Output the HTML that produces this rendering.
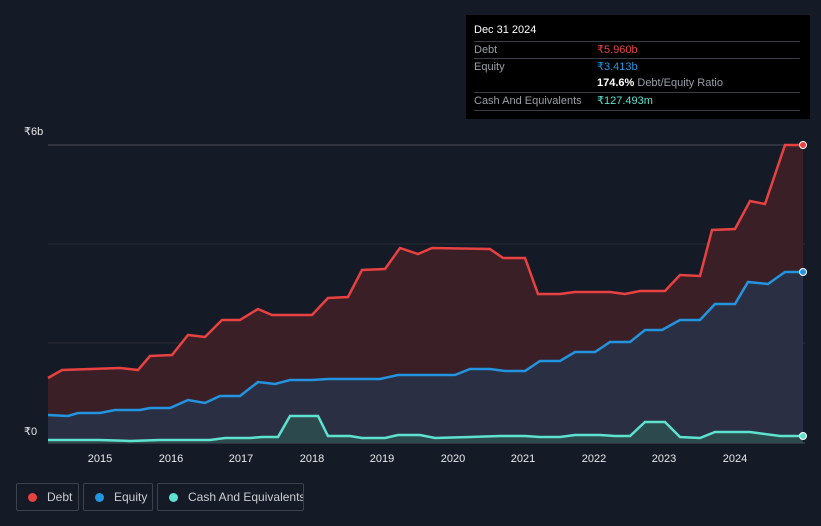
<!DOCTYPE html><html><head><style>
body{margin:0;width:821px;height:526px;background:#151b26;font-family:"Liberation Sans",sans-serif;overflow:hidden;position:relative}
.tt{position:absolute;left:466px;top:15px;width:344px;height:104px;background:#000;color:#fff;font-size:11px}
.tt .r{position:absolute;left:8px;right:10px;border-top:1px solid #3a3d44;height:16px;line-height:16px}
.lab{color:#9a9ea6}
.lg{position:absolute;top:483px;height:28px;border:1px solid #3b414d;border-radius:2px;color:#c9ccd2;font-size:12px;line-height:26px;box-sizing:border-box;white-space:nowrap;overflow:hidden}
.dot{display:inline-block;width:9px;height:9px;border-radius:50%;margin:0 10px 0 11px;vertical-align:-1px}
</style></head><body>
<svg width="821" height="526" style="position:absolute;left:0;top:0">
<line x1="48" y1="145" x2="805" y2="145" stroke="#4a4e58"/>
<line x1="48" y1="244" x2="805" y2="244" stroke="#262b36"/>
<line x1="48" y1="343" x2="805" y2="343" stroke="#262b36"/>
<line x1="48" y1="443" x2="805" y2="443" stroke="#4a4e58"/>
<polygon fill="#3b1f27" points="48,443 48,378 62,370 120,368 138,370 150,356 172,355 188,335 205,337 222,320 240,320 258,309 272,315 312,315 328,298 348,297 362,270 385,269 400,248 418,254 432,248 490,249 503,258 525,258 538,294 560,294 575,292 610,292 625,294 640,291 665,291 680,275 700,276 712,230 735,229 750,201 765,204 785,145 803,145 803,443"/>
<polygon fill="#2a2f43" points="48,443 48,415 68,416 78,413 100,413 115,410 140,410 150,408 170,408 188,400 205,403 220,396 240,396 258,382 275,384 290,380 312,380 328,379 380,379 398,375 420,375 455,375 470,369 490,369 505,371 525,371 540,361 560,361 575,352 595,352 610,342 630,342 645,330 662,330 680,320 700,320 715,304 735,304 748,282 768,284 785,272 803,272 803,443"/>
<polygon fill="#2c4a4e" points="48,443 48,440 100,440 130,441 160,440 210,440 225,438 250,438 262,437 278,437 290,416 318,416 328,436 350,436 362,438 385,438 398,435 420,435 435,438 470,437 500,436 525,436 540,437 560,437 575,435 600,435 615,436 630,436 645,422 665,422 680,437 700,438 715,432 750,432 780,436 803,436 803,443"/>
<polyline fill="none" stroke="#e84142" stroke-width="2.5" points="48,378 62,370 120,368 138,370 150,356 172,355 188,335 205,337 222,320 240,320 258,309 272,315 312,315 328,298 348,297 362,270 385,269 400,248 418,254 432,248 490,249 503,258 525,258 538,294 560,294 575,292 610,292 625,294 640,291 665,291 680,275 700,276 712,230 735,229 750,201 765,204 785,145 803,145"/>
<polyline fill="none" stroke="#2394df" stroke-width="2.5" points="48,415 68,416 78,413 100,413 115,410 140,410 150,408 170,408 188,400 205,403 220,396 240,396 258,382 275,384 290,380 312,380 328,379 380,379 398,375 420,375 455,375 470,369 490,369 505,371 525,371 540,361 560,361 575,352 595,352 610,342 630,342 645,330 662,330 680,320 700,320 715,304 735,304 748,282 768,284 785,272 803,272"/>
<polyline fill="none" stroke="#5ee2d0" stroke-width="2.5" points="48,440 100,440 130,441 160,440 210,440 225,438 250,438 262,437 278,437 290,416 318,416 328,436 350,436 362,438 385,438 398,435 420,435 435,438 470,437 500,436 525,436 540,437 560,437 575,435 600,435 615,436 630,436 645,422 665,422 680,437 700,438 715,432 750,432 780,436 803,436"/>
<circle cx="803" cy="145" r="3.5" fill="#e84142" stroke="#fff" stroke-width="1"/>
<circle cx="803" cy="272" r="3.5" fill="#2394df" stroke="#fff" stroke-width="1"/>
<circle cx="803" cy="436" r="3.5" fill="#5ee2d0" stroke="#fff" stroke-width="1"/>
<g fill="#e6e8eb" font-size="11" font-family="Liberation Sans,sans-serif">
<text x="24" y="135">₹6b</text><text x="24" y="435">₹0</text>
<g text-anchor="middle"><text x="100" y="462">2015</text><text x="171" y="462">2016</text><text x="241" y="462">2017</text><text x="312" y="462">2018</text><text x="382" y="462">2019</text><text x="453" y="462">2020</text><text x="523" y="462">2021</text><text x="594" y="462">2022</text><text x="664" y="462">2023</text><text x="735" y="462">2024</text></g>
</g>
</svg>
<div class="tt">
<div style="position:absolute;left:8px;top:9px;font-size:11px">Dec 31 2024</div>
<div class="r" style="top:26px"><span class="lab">Debt</span><span style="position:absolute;left:123px;color:#e84142">₹5.960b</span></div>
<div class="r" style="top:43px"><span class="lab">Equity</span><span style="position:absolute;left:123px;color:#2394df">₹3.413b</span></div>
<div style="position:absolute;left:131px;top:60px;line-height:16px"><b>174.6%</b> <span class="lab">Debt/Equity Ratio</span></div>
<div class="r" style="top:77px;height:17px;border-bottom:1px solid #3a3d44"><span class="lab">Cash And Equivalents</span><span style="position:absolute;left:123px;color:#5ee2d0">₹127.493m</span></div>
</div>
<div class="lg" style="left:16px;width:63px"><span class="dot" style="background:#e84142"></span>Debt</div>
<div class="lg" style="left:83px;width:70px"><span class="dot" style="background:#2394df"></span>Equity</div>
<div class="lg" style="left:157px;width:147px"><span class="dot" style="background:#5ee2d0"></span>Cash And Equivalents</div>
</body></html>
